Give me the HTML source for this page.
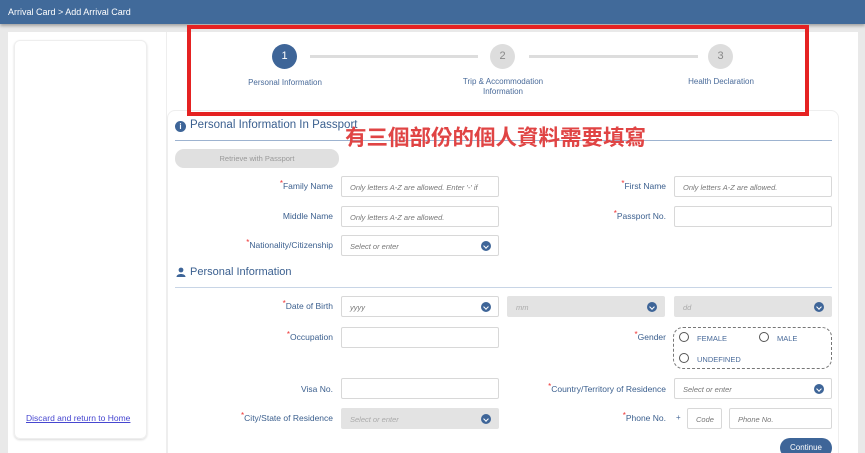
<!DOCTYPE html>
<html><head><meta charset="utf-8"><style>
*{box-sizing:border-box;margin:0;padding:0}
html,body{width:865px;height:453px;overflow:hidden}
body{background:#e9e9e9;font-family:"Liberation Sans","Noto Sans CJK TC",sans-serif;position:relative}
.a{position:absolute}
.hdr{left:0;top:0;width:865px;height:24px;background:#416a9a;color:#fff;font-size:9px;padding:7px 8px;box-shadow:0 2px 3px rgba(0,0,0,.3)}
.lbl{font-size:8.5px;color:#3b5f8e;text-align:right;width:200px;line-height:10px}
.lbl b{color:#e33;font-weight:normal;position:relative;top:-3px;font-size:8px}
.inp{height:21px;border:1px solid #d8d8d8;border-radius:2px;background:#fff;font-size:7.5px;font-style:italic;color:#777;padding:6px 8px}
.g{background:#e3e3e3;border-color:#e3e3e3;color:#aaa}
.dd{position:absolute;right:7px;top:5px;width:10px;height:10px;border-radius:50%;background:#3e6598}
.dd:after{content:"";position:absolute;left:3px;top:2.5px;width:3px;height:3px;border-right:1.3px solid #fff;border-bottom:1.3px solid #fff;transform:rotate(45deg)}
.step{width:25px;height:25px;border-radius:50%;text-align:center;line-height:25px;font-size:11px}
.sl{font-size:8px;color:#4a6b9a;text-align:center;width:120px;line-height:10px}
.rad{width:10px;height:10px;border:1px solid #555;border-radius:50%}
.rt{font-size:7.5px;color:#4a6b9a}
</style></head><body>
<div class="a hdr">Arrival Card &gt; Add Arrival Card</div>
<div class="a" style="left:8px;top:32px;width:850px;height:421px;background:#fff"></div>
<div class="a" style="left:14px;top:40px;width:133px;height:399px;border:1px solid #eee;border-radius:6px;box-shadow:0 1px 2px rgba(0,0,0,.15)"></div>
<div class="a" style="left:26px;top:413px;font-size:8.5px;color:#4646d0;text-decoration:underline">Discard and return to Home</div>
<div class="a" style="left:166px;top:32px;width:1px;height:421px;background:#eee"></div>
<div class="a" style="left:167px;top:110px;width:672px;height:360px;border:1px solid #eee;border-radius:8px"></div>
<div class="a" style="left:310px;top:55px;width:168px;height:3px;background:#ddd"></div>
<div class="a" style="left:529px;top:55px;width:169px;height:3px;background:#ddd"></div>
<div class="a step" style="left:272px;top:44px;background:#3e6598;color:#fff">1</div>
<div class="a step" style="left:490px;top:44px;background:#ddd;color:#888">2</div>
<div class="a step" style="left:708px;top:44px;background:#ddd;color:#888">3</div>
<div class="a sl" style="left:225px;top:78px">Personal Information</div>
<div class="a sl" style="left:443px;top:77px">Trip &amp; Accommodation<br>Information</div>
<div class="a sl" style="left:661px;top:77px">Health Declaration</div>
<div class="a" style="left:187px;top:25px;width:622px;height:91px;border:4px solid #e52222"></div>
<div class="a" style="left:175px;top:121px;width:11px;height:11px;border-radius:50%;background:#3e6598;color:#fff;font-size:8px;font-weight:bold;text-align:center;line-height:11px">i</div>
<div class="a" style="left:190px;top:119px;font-size:11.5px;color:#3a5f8f">Personal Information In Passport</div>
<div class="a" style="left:175px;top:140px;width:657px;height:1px;background:#9db3d0"></div>
<div class="a" style="left:345px;top:124px;font-size:21.5px;font-weight:bold;color:#e04444;font-family:'Noto Sans CJK TC',sans-serif;line-height:26px">有三個部份的個人資料需要填寫</div>
<div class="a" style="left:175px;top:149px;width:164px;height:19px;border-radius:9px;background:#e0e0e0;font-size:7.5px;color:#999;text-align:center;line-height:19px">Retrieve with Passport</div>

<div class="a lbl" style="left:133px;top:181px"><b>*</b>Family Name</div>
<div class="a inp" style="left:341px;top:176px;width:158px">Only letters A-Z are allowed. Enter '-' if</div>
<div class="a lbl" style="left:466px;top:181px"><b>*</b>First Name</div>
<div class="a inp" style="left:674px;top:176px;width:158px">Only letters A-Z are allowed.</div>

<div class="a lbl" style="left:133px;top:211px">Middle Name</div>
<div class="a inp" style="left:341px;top:206px;width:158px">Only letters A-Z are allowed.</div>
<div class="a lbl" style="left:466px;top:211px"><b>*</b>Passport No.</div>
<div class="a inp" style="left:674px;top:206px;width:158px"></div>

<div class="a lbl" style="left:133px;top:240px"><b>*</b>Nationality/Citizenship</div>
<div class="a inp" style="left:341px;top:235px;width:158px">Select or enter<span class="dd"></span></div>
<svg class="a" style="left:176px;top:267px" width="10" height="10" viewBox="0 0 10 10"><circle cx="5" cy="3" r="2.4" fill="#3e6598"/><path d="M0.5 10 C0.5 6 9.5 6 9.5 10Z" fill="#3e6598"/></svg>
<div class="a" style="left:190px;top:266px;font-size:11px;color:#3a5f8f">Personal Information</div>
<div class="a" style="left:175px;top:287px;width:657px;height:1px;background:#c8d5e6"></div>

<div class="a lbl" style="left:133px;top:301px"><b>*</b>Date of Birth</div>
<div class="a inp" style="left:341px;top:296px;width:158px">yyyy<span class="dd"></span></div>
<div class="a inp g" style="left:507px;top:296px;width:158px">mm<span class="dd"></span></div>
<div class="a inp g" style="left:674px;top:296px;width:158px">dd<span class="dd"></span></div>

<div class="a lbl" style="left:133px;top:332px"><b>*</b>Occupation</div>
<div class="a inp" style="left:341px;top:327px;width:158px"></div>
<div class="a lbl" style="left:466px;top:332px"><b>*</b>Gender</div>
<div class="a" style="left:673px;top:327px;width:159px;height:42px;border:1px dashed #777;border-radius:10px"></div>
<div class="a rad" style="left:679px;top:332px"></div><div class="a rt" style="left:697px;top:334px">FEMALE</div>
<div class="a rad" style="left:759px;top:332px"></div><div class="a rt" style="left:777px;top:334px">MALE</div>
<div class="a rad" style="left:679px;top:353px"></div><div class="a rt" style="left:697px;top:355px">UNDEFINED</div>

<div class="a lbl" style="left:133px;top:384px">Visa No.</div>
<div class="a inp" style="left:341px;top:378px;width:158px"></div>
<div class="a lbl" style="left:466px;top:384px;width:200px"><b>*</b>Country/Territory of Residence</div>
<div class="a inp" style="left:674px;top:378px;width:158px">Select or enter<span class="dd"></span></div>

<div class="a lbl" style="left:133px;top:413px"><b>*</b>City/State of Residence</div>
<div class="a inp g" style="left:341px;top:408px;width:158px">Select or enter<span class="dd"></span></div>
<div class="a lbl" style="left:466px;top:413px"><b>*</b>Phone No.</div>
<div class="a" style="left:676px;top:413px;font-size:8px;color:#4a6b9a">+</div>
<div class="a inp" style="left:687px;top:408px;width:35px">Code</div>
<div class="a inp" style="left:729px;top:408px;width:103px">Phone No.</div>
<div class="a" style="left:780px;top:438px;width:52px;height:20px;border-radius:10px;background:#3e6598;color:#fff;font-size:8px;text-align:center;line-height:20px">Continue</div>
</body></html>
